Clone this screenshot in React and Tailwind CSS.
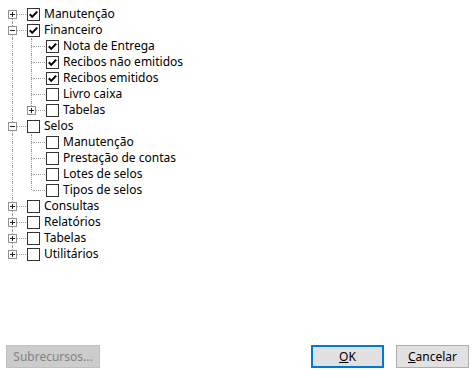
import React from 'react';

const TREE = [
  { label: 'Manutenção', checked: true, exp: '+' },
  {
    label: 'Financeiro', checked: true, exp: '-',
    children: [
      { label: 'Nota de Entrega', checked: true },
      { label: 'Recibos não emitidos', checked: true },
      { label: 'Recibos emitidos', checked: true },
      { label: 'Livro caixa' },
      { label: 'Tabelas', exp: '+' },
    ],
  },
  {
    label: 'Selos', exp: '-',
    children: [
      { label: 'Manutenção' },
      { label: 'Prestação de contas' },
      { label: 'Lotes de selos' },
      { label: 'Tipos de selos' },
    ],
  },
  { label: 'Consultas', exp: '+' },
  { label: 'Relatórios', exp: '+' },
  { label: 'Tabelas', exp: '+' },
  { label: 'Utilitários', exp: '+' },
];

function Expander({ sign }) {
  return (
    <svg width="9" height="9" viewBox="0 0 9 9" className="absolute left-0 top-[4px]">
      <rect x="0.5" y="0.5" width="8" height="8" fill="#fff" stroke="#919191" />
      <path d="M2 4.5h5" stroke="#222" />
      {sign === '+' && <path d="M4.5 2v5" stroke="#222" />}
    </svg>
  );
}

// one 19px gutter column of the tree: dotted lines, optional expander
function Gutter({ up, down, horiz, exp }) {
  return (
    <div className="relative w-[19px] h-full shrink-0">
      {up && <div className="absolute left-[4px] top-0 h-[8px] border-l border-dotted border-[#a0a0a0]" />}
      {down && <div className="absolute left-[4px] top-[8px] h-[8px] border-l border-dotted border-[#a0a0a0]" />}
      {horiz && <div className="absolute left-[6px] top-[8px] w-[12px] border-t border-dotted border-[#a0a0a0]" />}
      {exp && <Expander sign={exp} />}
    </div>
  );
}

function Check({ checked }) {
  return (
    <svg width="13" height="13" viewBox="0 0 13 13" className="shrink-0">
      <rect x="0.5" y="0.5" width="12" height="12" fill="#fff" stroke="#333" />
      {checked && <path d="M2.8 6.3l2.4 2.6L10.2 3.6" fill="none" stroke="#000" strokeWidth="2" />}
    </svg>
  );
}

function Row({ gutters, item }) {
  return (
    <div className="flex items-center h-[16px]">
      {gutters.map((g, i) => <Gutter key={i} {...g} />)}
      <Check checked={item.checked} />
      <span className="ml-[4px] text-[12px] leading-none text-black">{item.label}</span>
    </div>
  );
}

export default function App() {
  const rows = [];
  TREE.forEach((node, i) => {
    const last = i === TREE.length - 1;
    rows.push(
      <Row key={`r${i}`} item={node}
        gutters={[{ up: i > 0, down: !last, horiz: true, exp: node.exp }]} />
    );
    (node.children || []).forEach((c, j) => {
      const lastChild = j === node.children.length - 1;
      rows.push(
        <Row key={`r${i}-${j}`} item={c}
          gutters={[
            { up: true, down: !last },
            { up: true, down: !lastChild, horiz: true, exp: c.exp },
          ]} />
      );
    });
  });

  return (
    <div className="w-[475px] h-[378px] bg-white flex flex-col" style={{ fontFamily: '"Noto Sans", "Open Sans", sans-serif' }}>
      <div className="flex-1 pt-[6px] pl-[8px]">
        {rows}
      </div>
      <div className="flex items-center px-[6px] pb-[10px]">
        <button disabled className="w-[94px] h-[23px] bg-[#cccccc] border border-[#bfbfbf] text-[12px] text-[#838383]">
          Subrecursos...
        </button>
        <div className="flex-1" />
        <button className="w-[73px] h-[23px] bg-[#e1e1e1] border-2 border-[#0078d7] text-[12px] text-black">
          <span className="underline">O</span>K
        </button>
        <button className="ml-[12px] w-[73px] h-[23px] bg-[#e1e1e1] border border-[#adadad] text-[12px] text-black">
          <span className="underline">C</span>ancelar
        </button>
      </div>
    </div>
  );
}
